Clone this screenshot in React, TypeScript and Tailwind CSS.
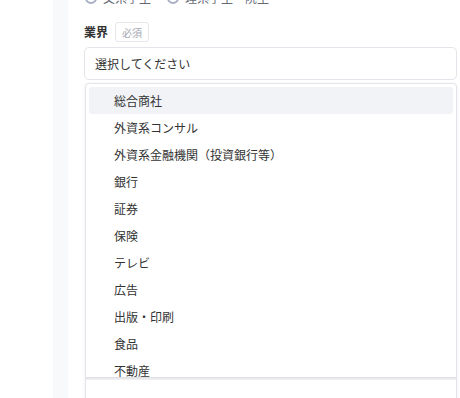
const industries = [
  "総合商社",
  "外資系コンサル",
  "外資系金融機関（投資銀行等）",
  "銀行",
  "証券",
  "保険",
  "テレビ",
  "広告",
  "出版・印刷",
  "食品",
  "不動産",
];

const Radio = ({ label }: { label: string }) => (
  <div className="flex items-center gap-1.5">
    <span className="h-[12px] w-[12px] rounded-full border-2 border-[#aab0c4]" />
    <span className="text-[12px] text-[#666a75]">{label}</span>
  </div>
);

export default function App() {
  return (
    <div
      className="flex h-[398px] w-[460px] overflow-hidden bg-white text-[#333]"
      style={{ fontFamily: '"Noto Sans CJK JP", "Noto Sans", sans-serif' }}
    >
      <div className="w-[53px] shrink-0 bg-white" />
      <div className="w-[15px] shrink-0 bg-[#f8f9fb]" />
      <div className="flex-1 pl-4 pr-[3px]">
        <div className="-mt-[10px] flex h-[16px] items-center gap-4 pl-[1px]">
          <Radio label="文系学生" />
          <Radio label="理系学生・院生" />
        </div>

        <div className="mt-[16px] flex h-[20px] items-center gap-[7px]">
          <span className="text-[12px] font-bold leading-none">業界</span>
          <span className="flex h-[20px] w-[34px] items-center justify-center rounded-[3px] border border-[#e6e8ec] text-[10px] text-[#a3a7b0]">
            必須
          </span>
        </div>

        <div className="mt-[5px] flex h-[33px] items-center rounded-[5px] border border-[#e3e5ea] px-[10px] text-[12px]">
          選択してください
        </div>

        <div className="mt-[3px] ml-[1px] rounded-t-[4px] border-x border-t border-[#e3e5ea] pt-[3px] shadow-[0_1px_4px_rgba(0,0,0,0.06)]">
          <ul className="h-[290px] overflow-hidden px-[3px]">
            {industries.map((name, i) => (
              <li
                key={name}
                className={`flex h-[27px] items-center pl-[25px] text-[12px] ${
                  i === 0 ? "rounded-[3px] bg-[#f1f3f7]" : ""
                }`}
              >
                {name}
              </li>
            ))}
          </ul>
          <div className="h-[3px] bg-gradient-to-b from-[#dcdde1] to-[#f4f4f6]" />
          <div className="h-[30px] bg-white" />
        </div>
      </div>
    </div>
  );
}
